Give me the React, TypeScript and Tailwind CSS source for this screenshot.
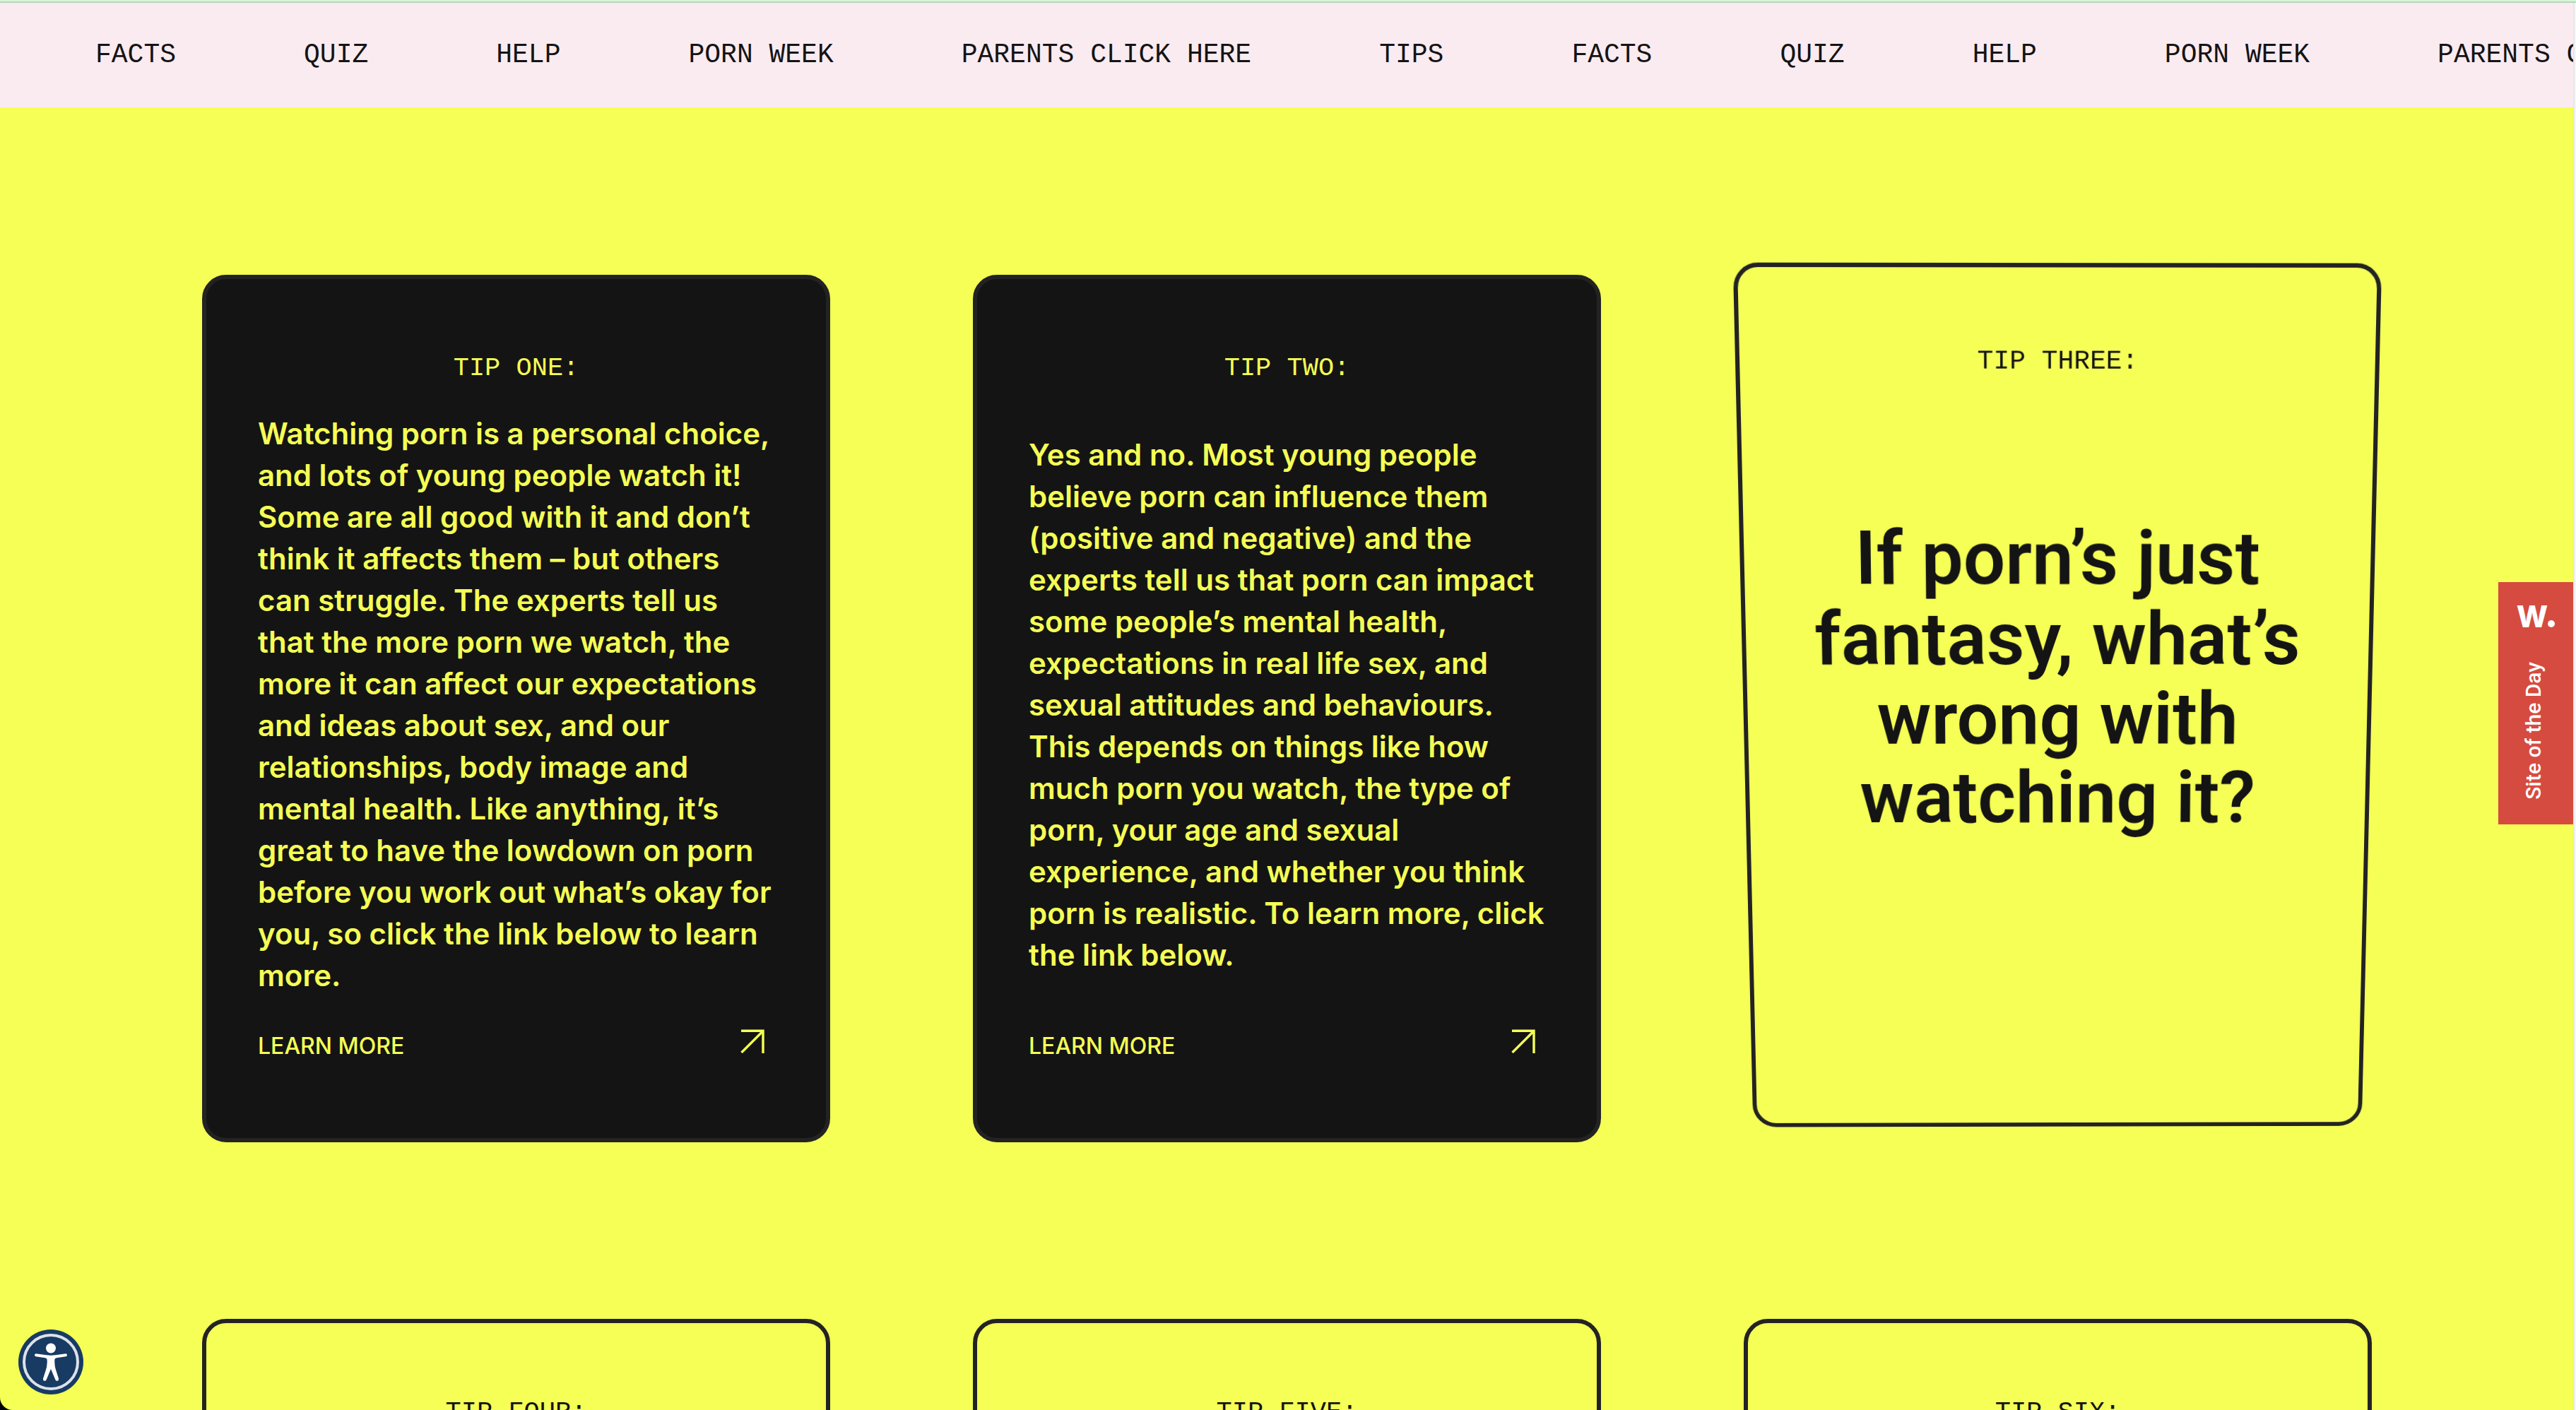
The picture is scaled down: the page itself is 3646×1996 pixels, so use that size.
type Tip = {
  label: string;
  question?: string;
  answer?: string;
  tilted?: boolean;
};

const menu = ["FACTS", "QUIZ", "HELP", "PORN WEEK", "PARENTS CLICK HERE", "TIPS"];

const tips: Tip[] = [
  {
    label: "TIP ONE:",
    answer:
      "Watching porn is a personal choice, and lots of young people watch it! Some are all good with it and don’t think it affects them – but others can struggle. The experts tell us that the more porn we watch, the more it can affect our expectations and ideas about sex, and our relationships, body image and mental health. Like anything, it’s great to have the lowdown on porn before you work out what’s okay for you, so click the link below to learn more.",
  },
  {
    label: "TIP TWO:",
    answer:
      "Yes and no. Most young people believe porn can influence them (positive and negative) and the experts tell us that porn can impact some people’s mental health, expectations in real life sex, and sexual attitudes and behaviours. This depends on things like how much porn you watch, the type of porn, your age and sexual experience, and whether you think porn is realistic. To learn more, click the link below.",
  },
  { label: "TIP THREE:", question: "If porn’s just fantasy, what’s wrong with watching it?", tilted: true },
  { label: "TIP FOUR:" },
  { label: "TIP FIVE:" },
  { label: "TIP SIX:" },
];

function ArrowIcon() {
  return (
    <svg viewBox="0 0 34 34" className="mr-3.5 size-[34px]" fill="none" stroke="currentColor" strokeWidth="3.4" aria-hidden="true">
      <path d="M1 2.2H32V34" />
      <path d="M1.5 33L31.5 3" />
    </svg>
  );
}

function TipLabel({ children }: { children: string }) {
  return (
    <p className="text-center font-['Liberation_Mono',monospace] text-[37px] leading-10">{children}</p>
  );
}

function AnswerCard({ tip }: { tip: Tip }) {
  return (
    <article className="flex min-h-[1228px] flex-col rounded-[34px] border-6 border-[#232323] bg-[#141414] px-[73px] pt-[106px] pb-[110px] text-[#f5ff55]">
      <TipLabel>{tip.label}</TipLabel>
      <div className="flex flex-1 items-center pb-1">
        <p className="text-[42px] leading-[59px] font-semibold">{tip.answer}</p>
      </div>
      <a href="#learn-more" className="flex h-11 items-start justify-between">
        <span className="self-end text-[32px] leading-10 font-medium">LEARN MORE</span>
        <ArrowIcon />
      </a>
    </article>
  );
}

function QuestionCard({ tip }: { tip: Tip }) {
  const base = "flex min-h-[1228px] flex-col rounded-[34px] border-6 border-[#232323] px-[73px] pt-[106px] pb-[230px]";
  const tilt = tip.tilted
    ? " shadow-[0_0_0_6px_#f5ff55] will-change-transform [transform:perspective(2000px)_rotateX(-6deg)_rotateY(0.3deg)]"
    : "";
  return (
    <article className={base + tilt}>
      <TipLabel>{tip.label}</TipLabel>
      {tip.question && (
        <div className="flex flex-1 items-center justify-center">
          <h2 className="text-center font-['Roboto',sans-serif] text-[104px] leading-[113px] font-semibold">
            {tip.question}
          </h2>
        </div>
      )}
    </article>
  );
}

function AccessibilityButton() {
  return (
    <button type="button" aria-label="Accessibility options" className="fixed bottom-[22px] left-[26px] size-[92px] rounded-full">
      <svg viewBox="0 0 92 92" className="size-full" aria-hidden="true">
        <circle cx="46" cy="46" r="46" fill="#173b63" />
        <circle cx="46" cy="46" r="38" fill="none" stroke="#dde1e9" strokeWidth="4" />
        <circle cx="46" cy="26.500" r="7" fill="#fff" />
        <path
          d="M25 34.200L40 36.300Q46 37 52 36.300L67 34.200Q69 34.200 69 36.300Q69 38 67.300 38.300L54 40.200Q51.300 40.700 51.300 43.500L51.300 47Q51.600 53 53 57L57 69.500Q57.400 72 55.400 72.700Q53.300 73.200 52.400 71.200L46 56L39.600 71.200Q38.700 73.200 36.600 72.700Q34.600 72 35 69.500L39 57Q40.400 53 40.700 47L40.700 43.500Q40.700 40.700 38 40.200L24.700 38.300Q23 38 23 36.300Q23 34.200 25 34.200Z"
          fill="#fff"
        />
      </svg>
    </button>
  );
}

function AwardBadge() {
  return (
    <a
      href="#award"
      className="fixed top-[824px] right-1 flex h-[343px] w-[106px] flex-col items-center justify-between bg-[#d54b40] pt-[29px] pb-[35px] text-white"
    >
      <span className="flex items-baseline text-[42px] leading-10 font-extrabold">
        W<span className="size-[10px] rounded-full bg-white" />
      </span>
      <span className="mr-1.5 rotate-180 font-['Roboto',sans-serif] text-[30px] leading-9 font-medium [writing-mode:vertical-rl]">
        Site of the Day
      </span>
    </a>
  );
}

export default function App() {
  return (
    <div className="flex h-screen flex-col overflow-hidden bg-black font-['Inter',sans-serif] text-[#141414]">
      <div className="h-1 shrink-0 border-b-2 border-[#b9d4bf] bg-[#d6f6da]" />
      <div className="flex min-h-0 flex-1">
        <div className="min-w-0 flex-1 overflow-hidden rounded-bl-[18px] bg-[#f5ff55]">
          <nav className="flex h-37 items-center gap-[181px] overflow-hidden bg-[#faebf1] pl-[135px] font-['Liberation_Mono',monospace] text-[38px] leading-11 whitespace-nowrap">
            {[...menu, ...menu].map((item, i) => (
              <a key={i} href="#menu" className="shrink-0">
                {item}
              </a>
            ))}
          </nav>
          <main className="grid grid-cols-3 gap-x-[202px] gap-y-[250px] pt-[237px] pr-[285px] pl-[286px]">
            {tips.map((tip) =>
              tip.answer ? <AnswerCard key={tip.label} tip={tip} /> : <QuestionCard key={tip.label} tip={tip} />,
            )}
          </main>
        </div>
        <div className="w-1 shrink-0 border-l-2 border-[#e6e6e9] bg-[#f6f6f8]" />
      </div>
      <AwardBadge />
      <AccessibilityButton />
    </div>
  );
}
